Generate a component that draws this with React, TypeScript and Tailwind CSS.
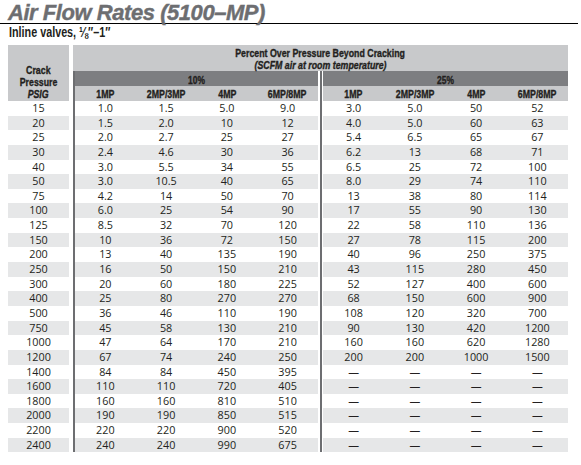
import React from 'react';

type Row = [string, string[], string[]];

const D = '—';
const NONE = [D, D, D, D];

const rows: Row[] = [
  ['15', ['1.0', '1.5', '5.0', '9.0'], ['3.0', '5.0', '50', '52']],
  ['20', ['1.5', '2.0', '10', '12'], ['4.0', '5.0', '60', '63']],
  ['25', ['2.0', '2.7', '25', '27'], ['5.4', '6.5', '65', '67']],
  ['30', ['2.4', '4.6', '30', '36'], ['6.2', '13', '68', '71']],
  ['40', ['3.0', '5.5', '34', '55'], ['6.5', '25', '72', '100']],
  ['50', ['3.0', '10.5', '40', '65'], ['8.0', '29', '74', '110']],
  ['75', ['4.2', '14', '50', '70'], ['13', '38', '80', '114']],
  ['100', ['6.0', '25', '54', '90'], ['17', '55', '90', '130']],
  ['125', ['8.5', '32', '70', '120'], ['22', '58', '110', '136']],
  ['150', ['10', '36', '72', '150'], ['27', '78', '115', '200']],
  ['200', ['13', '40', '135', '190'], ['40', '96', '250', '375']],
  ['250', ['16', '50', '150', '210'], ['43', '115', '280', '450']],
  ['300', ['20', '60', '180', '225'], ['52', '127', '400', '600']],
  ['400', ['25', '80', '270', '270'], ['68', '150', '600', '900']],
  ['500', ['36', '46', '110', '190'], ['108', '120', '320', '700']],
  ['750', ['45', '58', '130', '210'], ['90', '130', '420', '1200']],
  ['1000', ['47', '64', '170', '210'], ['160', '160', '620', '1280']],
  ['1200', ['67', '74', '240', '250'], ['200', '200', '1000', '1500']],
  ['1400', ['84', '84', '450', '395'], NONE],
  ['1600', ['110', '110', '720', '405'], NONE],
  ['1800', ['160', '160', '810', '510'], NONE],
  ['2000', ['190', '190', '850', '515'], NONE],
  ['2200', ['220', '220', '900', '520'], NONE],
  ['2400', ['240', '240', '990', '675'], NONE],
];

const models = ['1MP', '2MP/3MP', '4MP', '6MP/8MP'];

const narrow = "font-['Liberation_Sans',sans-serif] font-bold [-webkit-text-stroke:0.35px_#231f20]";

// no narrow face installed, so squeeze Arial-width text down to Arial Narrow width
const N: React.FC<{ children: React.ReactNode; className?: string }> = ({ children, className = '' }) => (
  <span className={`inline-block whitespace-nowrap scale-x-[0.8] ${className}`}>{children}</span>
);

// bar + group + gap + bar + gap + group, shared by header bands and data rows
const Split: React.FC<{ left: React.ReactNode; right: React.ReactNode; className?: string; h: string }> = ({ left, right, className = '', h }) => (
  <div className={`flex ${h}`}>
    <div className="w-[2px] bg-[#6d6e71]" />
    <div className={`w-[243px] flex ${className}`}>{left}</div>
    <div className="w-[2px]" />
    <div className="w-[2px] bg-[#6d6e71]" />
    <div className="w-[1px]" />
    <div className={`w-[245px] flex ${className}`}>{right}</div>
  </div>
);

const Cells: React.FC<{ values: string[]; squeeze?: boolean }> = ({ values, squeeze }) => (
  <>
    {values.map((v, i) => (
      <div key={i} className="flex-1 text-center">{squeeze ? <N>{v}</N> : v}</div>
    ))}
  </>
);

export default function App() {
  return (
    <div className="w-[581px] h-[465px] bg-white overflow-hidden text-[#231f20]">
      <div className="h-[24px] pt-[2px] pl-[8px] mr-[3px] border-b border-black">
        <h1 className="font-['Liberation_Sans',sans-serif] font-bold italic text-[22px] leading-[22px] text-[#6d6e71] tracking-[-0.45px] [-webkit-text-stroke:0.4px_#6d6e71]">
          Air Flow Rates (5100–MP)
        </h1>
      </div>
      <div className="pl-[9px] h-[17px] font-['Liberation_Sans',sans-serif] font-bold text-[14px] leading-[17px]">
        <span className="inline-block origin-left scale-x-[0.77] whitespace-nowrap">Inline valves, ⅛″–1″</span>
      </div>

      <div className="mt-[4px] ml-[8px]">
        {/* header */}
        <div className="flex h-[56px]">
          <div className={`w-[61px] bg-[#c8c9cb] flex flex-col justify-end items-center pb-[1px] text-[11px] leading-[12px] ${narrow}`}>
            <N>Crack</N>
            <N>Pressure</N>
            <N className="italic">PSIG</N>
          </div>
          <div className="w-[4px]" />
          <div className="w-[495px] flex flex-col">
            <div className={`h-[26px] bg-[#c8c9cb] pt-[2px] text-center text-[11px] leading-[12px] ${narrow}`}>
              <div><N>Percent Over Pressure Beyond Cracking</N></div>
              <div><N className="italic">(SCFM air at room temperature)</N></div>
            </div>
            <Split
              h="h-[15px]"
              className={`bg-[#7d7e81] justify-center items-end text-[10.5px] leading-[11px] ${narrow}`}
              left={<N>10%</N>}
              right={<N>25%</N>}
            />
            <Split
              h="h-[15px]"
              className={`bg-[#c8c9cb] pt-[1px] text-[11px] leading-[14px] ${narrow}`}
              left={<Cells values={models} squeeze />}
              right={<Cells values={models} squeeze />}
            />
          </div>
        </div>

        {/* data rows */}
        <div className="font-['Open_Sans',sans-serif] text-[10.8px] leading-[14.65px]">
          {rows.map(([psig, a, b], i) => {
            const bg = i % 2 === 1 ? 'bg-[#e6e7e8]' : 'bg-white';
            return (
              <div key={psig} className="flex h-[14.65px]">
                <div className={`w-[61px] text-center ${bg}`}>{psig}</div>
                <div className="w-[4px]" />
                <Split h="h-[14.65px]" className={bg} left={<Cells values={a} />} right={<Cells values={b} />} />
              </div>
            );
          })}
        </div>
      </div>
    </div>
  );
}
